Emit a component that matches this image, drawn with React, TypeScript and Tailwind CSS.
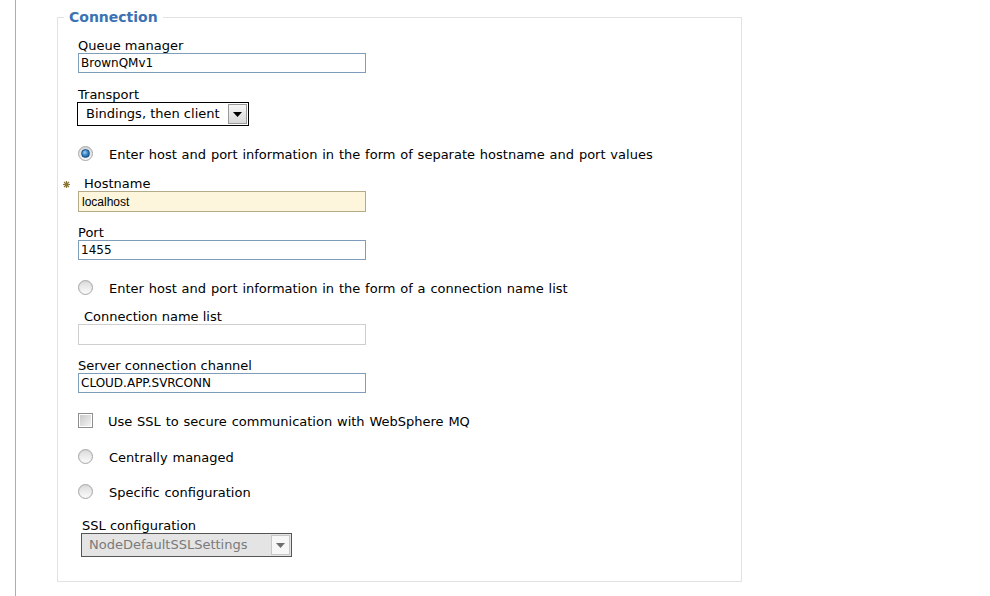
import React from "react";

const font = { fontFamily: '"DejaVu Sans", Verdana, sans-serif' };

function Radio({ checked = false }: { checked?: boolean }) {
  return (
    <span className="relative -top-[2px] flex h-[15px] w-[15px] shrink-0 items-center justify-center rounded-full border border-[#a8a8a8] bg-[linear-gradient(180deg,#d4d4d4,#f6f6f6)]">
      {checked ? (
        <span className="h-[9px] w-[9px] rounded-full border border-[#1d4f8a] bg-[radial-gradient(circle_at_40%_35%,#9fd2f5_0%,#3a86c8_45%,#143f75_100%)]" />
      ) : (
        <span className="h-[11px] w-[11px] rounded-full bg-[linear-gradient(180deg,#dedede,#f9f9f9)]" />
      )}
    </span>
  );
}

function Checkbox() {
  return (
    <span className="relative -top-[2px] flex h-[15px] w-[15px] shrink-0 items-center justify-center border border-[#8e8e8e] bg-white">
      <span className="h-[11px] w-[11px] bg-[linear-gradient(135deg,#c9c9c9,#f4f4f4)]" />
    </span>
  );
}

function Label({ children, indent = false }: { children: React.ReactNode; indent?: boolean }) {
  return (
    <div className={`h-[16px] text-[13px] leading-[16px] text-black ${indent ? "pl-[6px]" : ""}`}>
      <span className="relative top-[1px]">{children}</span>
    </div>
  );
}

function TextInput({ value }: { value: string }) {
  return (
    <div className="flex h-[20px] w-[288px] items-center border border-[#7f9db9] bg-white px-[2px] text-[12px] text-black">
      {value}
    </div>
  );
}

function SelectBox({ value, disabled = false }: { value: string; disabled?: boolean }) {
  return (
    <div
      className={`flex h-[24px] items-center border ${
        disabled ? "w-[211px] border-[#555] bg-[#e4e4e4] text-[#7a7a7a]" : "w-[172px] border-black bg-white text-black"
      } p-[1px] text-[13px]`}
    >
      <span className={`flex-1 ${disabled ? "pl-[6px]" : "pl-[7px]"}`}>{value}</span>
      <span
        className={`flex h-[20px] w-[19px] items-center justify-center border ${
          disabled ? "border-[#c8c8c8] bg-[#f7f7f7]" : "border-[#9a9a9a] bg-[linear-gradient(180deg,#f6f6f6,#d9d9d9)]"
        }`}
      >
        <svg width="9" height="5" viewBox="0 0 9 5">
          <path d="M0 0 H9 L4.5 5 Z" fill={disabled ? "#6e6e6e" : "#000"} />
        </svg>
      </span>
    </div>
  );
}

function OptionRow({ control, text, gap = "ml-[16px]", mt }: { control: React.ReactNode; text: string; gap?: string; mt: string }) {
  return (
    <div className={`flex h-[16px] items-center text-[13px] text-black ${mt}`}>
      {control}
      <span className={`${gap} [word-spacing:0.7px]`}>{text}</span>
    </div>
  );
}

export default function App() {
  return (
    <div className="flex h-[596px] w-[990px] overflow-hidden bg-white" style={font}>
      <div className="ml-[15px] h-full w-px bg-[#9eaed0]" />
      <fieldset className="ml-[41px] mt-[9px] h-[573px] w-[685px] border border-[#e2e2e2] p-0">
        <legend className="ml-[6px] px-[5px] text-[14px] font-bold leading-[17px] text-[#3a72b4]">Connection</legend>
        <div className="flex flex-col pl-[20px] pt-[11px]">
          <Label>Queue manager</Label>
          <TextInput value="BrownQMv1" />

          <div className="mt-[13px]">
            <Label>Transport</Label>
          </div>
          <div className="-ml-[1px]">
            <SelectBox value="Bindings, then client" />
          </div>

          <OptionRow
            mt="mt-[21px]"
            control={<Radio checked />}
            text="Enter host and port information in the form of separate hostname and port values"
          />

          <div className="relative mt-[12px]">
            <svg className="absolute -left-[15px] top-[6px]" width="7" height="7" viewBox="0 0 7 7">
              <path d="M3.5 0 V7 M0 3.5 H7 M1 1 L6 6 M6 1 L1 6" stroke="#8a7534" strokeWidth="1.2" />
            </svg>
            <Label indent>Hostname</Label>
          </div>
          <div
            className="flex h-[21px] w-[288px] items-center border border-[#b3ab89] bg-[#fdf5dc] px-[3px] text-[12px] text-black"
            style={{ fontFamily: '"Liberation Sans", Arial, sans-serif' }}
          >
            localhost
          </div>

          <div className="mt-[12px]">
            <Label>Port</Label>
          </div>
          <TextInput value="1455" />

          <OptionRow
            mt="mt-[21px]"
            control={<Radio />}
            text="Enter host and port information in the form of a connection name list"
          />

          <div className="mt-[11px]">
            <Label indent>Connection name list</Label>
          </div>
          <div className="h-[21px] w-[288px] border border-[#cfcfcf] bg-white" />

          <div className="mt-[12px]">
            <Label>Server connection channel</Label>
          </div>
          <TextInput value="CLOUD.APP.SVRCONN" />

          <OptionRow
            mt="mt-[21px]"
            gap="ml-[15px]"
            control={<Checkbox />}
            text="Use SSL to secure communication with WebSphere MQ"
          />
          <OptionRow mt="mt-[20px]" control={<Radio />} text="Centrally managed" />
          <OptionRow mt="mt-[19px]" control={<Radio />} text="Specific configuration" />

          <div className="mt-[16px] pl-[4px]">
            <Label>SSL configuration</Label>
          </div>
          <div className="ml-[3px]">
            <SelectBox value="NodeDefaultSSLSettings" disabled />
          </div>
        </div>
      </fieldset>
    </div>
  );
}
